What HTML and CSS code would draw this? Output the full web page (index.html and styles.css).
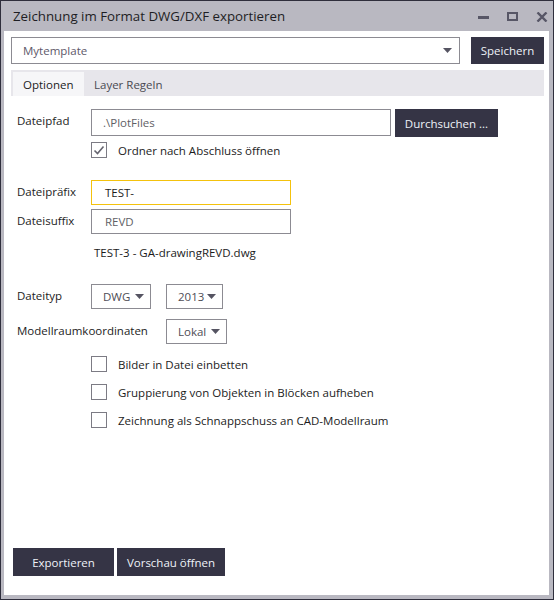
FILE: index.html
```html
<!DOCTYPE html>
<html lang="de">
<head>
<meta charset="utf-8">
<title>Zeichnung im Format DWG/DXF exportieren</title>
<link rel="stylesheet" href="styles.css">
</head>
<body>
<div class="window">
  <div class="titlebar">
    <span class="title">Zeichnung im Format DWG/DXF exportieren</span>
    <div class="controls">
      <svg class="ctl" width="12" height="10" viewBox="0 0 12 10"><rect x="0" y="4" width="11" height="3" fill="#575666"/></svg>
      <svg class="ctl" width="12" height="10" viewBox="0 0 12 10"><rect x="1" y="1" width="9" height="7" fill="none" stroke="#575666" stroke-width="2"/></svg>
      <svg class="ctl" width="12" height="10" viewBox="0 0 12 10"><path d="M1.5 0.5 L10.5 9.5 M10.5 0.5 L1.5 9.5" stroke="#575666" stroke-width="2.4"/></svg>
    </div>
  </div>
  <div class="content">
    <div class="toprow">
      <div class="select main-select">
        <span class="select-text">Mytemplate</span>
        <svg class="arrow" width="9" height="5" viewBox="0 0 9 5"><path d="M0 0 H9 L4.5 5 Z" fill="#555462"/></svg>
      </div>
      <button class="btn save">Speichern</button>
    </div>
    <div class="tabs">
      <div class="tab active">Optionen</div>
      <div class="tab">Layer Regeln</div>
    </div>
    <div class="form">
      <div class="row row-path">
        <span class="label">Dateipfad</span>
        <div class="input input-path">.\PlotFiles</div>
        <button class="btn browse">Durchsuchen ...</button>
      </div>
      <div class="check-row row-open">
        <span class="cb">
          <svg width="14" height="14" viewBox="0 0 14 14"><path d="M2.5 7.5 L5.5 10.5 L11.5 3.5" fill="none" stroke="#666570" stroke-width="1.6"/></svg>
        </span>
        <span class="check-label">Ordner nach Abschluss öffnen</span>
      </div>
      <div class="row row-prefix">
        <span class="label">Dateipräfix</span>
        <div class="input input-short focus">TEST-</div>
      </div>
      <div class="row row-suffix">
        <span class="label">Dateisuffix</span>
        <div class="input input-short">REVD</div>
      </div>
      <div class="preview">TEST-3 - GA-drawingREVD.dwg</div>
      <div class="row row-type">
        <span class="label">Dateityp</span>
        <div class="dd dd-dwg"><span>DWG</span><svg class="arrow" width="9" height="5" viewBox="0 0 9 5"><path d="M0 0 H9 L4.5 5 Z" fill="#555462"/></svg></div>
        <div class="dd dd-year"><span>2013</span><svg class="arrow" width="9" height="5" viewBox="0 0 9 5"><path d="M0 0 H9 L4.5 5 Z" fill="#555462"/></svg></div>
      </div>
      <div class="row row-coord">
        <span class="label label-wide">Modellraumkoordinaten</span>
        <div class="dd dd-lokal"><span>Lokal</span><svg class="arrow" width="9" height="5" viewBox="0 0 9 5"><path d="M0 0 H9 L4.5 5 Z" fill="#555462"/></svg></div>
      </div>
      <div class="check-row row-opt first">
        <span class="cb"></span>
        <span class="check-label">Bilder in Datei einbetten</span>
      </div>
      <div class="check-row row-opt">
        <span class="cb"></span>
        <span class="check-label">Gruppierung von Objekten in Blöcken aufheben</span>
      </div>
      <div class="check-row row-opt">
        <span class="cb"></span>
        <span class="check-label">Zeichnung als Schnappschuss an CAD-Modellraum</span>
      </div>
    </div>
    <div class="footer">
      <button class="btn export">Exportieren</button>
      <button class="btn preview-btn">Vorschau öffnen</button>
    </div>
  </div>
</div>
</body>
</html>
```

FILE: styles.css
```css
* { box-sizing: border-box; }
html, body { margin: 0; padding: 0; }
body {
  font-family: "Open Sans", "Noto Sans", "Liberation Sans", sans-serif;
  font-size: 11.5px;
  color: #1c1c1c;
  background: #ffffff;
}
.window {
  width: 554px;
  height: 600px;
  border: 1px solid #2f2e3c;
  background: #b9b8c1;
  display: flex;
  flex-direction: column;
}
.titlebar {
  height: 30px;
  display: flex;
  align-items: center;
  padding-left: 12px;
  flex: none;
}
.title {
  font-size: 13.3px;
  color: #1e1e24;
  flex: 1;
  padding-bottom: 1px;
}
.controls {
  display: flex;
  align-items: center;
  gap: 17px;
  padding-right: 5px;
  padding-top: 1px;
}
.ctl { display: block; }
.content {
  flex: 1;
  background: #ffffff;
  margin: 0 4px 4px 3px;
  padding: 6px 5px 19px 7px;
  display: flex;
  flex-direction: column;
}
.toprow {
  display: flex;
  height: 27px;
  gap: 11px;
}
.select {
  border: 1px solid #8c8b92;
  display: flex;
  align-items: center;
  justify-content: space-between;
}
.main-select {
  width: 449px;
  padding: 0 7px 0 11px;
}
.select-text { color: #5d5869; }
.arrow { display: block; }
.btn {
  background: #353445;
  color: #eef2f8;
  border: none;
  font-family: inherit;
  font-size: 11.5px;
  padding: 0;
  margin: 0;
  display: flex;
  align-items: center;
  justify-content: center;
}
.save { width: 73px; height: 27px; }
.tabs {
  margin-top: 6px;
  height: 26px;
  background: #e7e6eb;
  display: flex;
  align-items: flex-end;
  padding-left: 2px;
}
.tab {
  height: 24px;
  display: flex;
  align-items: center;
  padding: 0 10px;
  color: #4a4a52;
}
.tab.active {
  background: #f6f6f8;
  width: 71px;
  color: #1c1c1c;
}
.form {
  padding-left: 6px;
  display: flex;
  flex-direction: column;
}
.row {
  display: flex;
  align-items: center;
}
.label {
  width: 74px;
  flex: none;
  padding-bottom: 3px;
}
.label-wide { width: 149px; }
.input {
  border: 1px solid #8c8b92;
  display: flex;
  align-items: center;
  color: #5f5f66;
}
.row-path { margin-top: 13px; height: 28px; align-items: flex-start; }
.row-path .label { line-height: 24px; }
.input-path { width: 300px; height: 27px; padding-left: 11px; }
.browse { width: 103px; height: 28px; margin-left: 4px; }
.check-row {
  display: flex;
  align-items: center;
  height: 16px;
}
.row-open { margin-top: 5px; margin-left: 74px; }
.cb {
  width: 16px;
  height: 16px;
  border: 1px solid #7c7b84;
  display: flex;
  align-items: center;
  justify-content: center;
  flex: none;
}
.cb svg { display: block; }
.check-label { margin-left: 11px; }
.row-prefix { margin-top: 22px; height: 25px; }
.row-suffix { margin-top: 4px; height: 25px; }
.input-short { width: 200px; height: 25px; padding-left: 13px; }
.input.focus { border-color: #f4c20d; color: #1c1c1c; }
.preview {
  margin-top: 11px;
  margin-left: 77px;
  line-height: 16px;
}
.row-type { margin-top: 23px; height: 25px; }
.row-coord { margin-top: 10px; height: 25px; }
.dd {
  border: 1px solid #8c8b92;
  height: 25px;
  display: flex;
  align-items: center;
  justify-content: space-between;
  color: #4e4d56;
  padding: 0 6px 0 11px;
  flex: none;
}
.dd-dwg { width: 60px; }
.dd-year { width: 57px; margin-left: 15px; padding-left: 11px; }
.dd-lokal { width: 61px; padding-left: 11px; }
.row-opt { margin-top: 12px; margin-left: 74px; }
.row-opt.first { margin-top: 12px; }
.footer {
  margin-top: auto;
  display: flex;
  gap: 3px;
  padding-left: 2px;
}
.export { width: 101px; height: 28px; }
.preview-btn { width: 108px; height: 28px; }
```
